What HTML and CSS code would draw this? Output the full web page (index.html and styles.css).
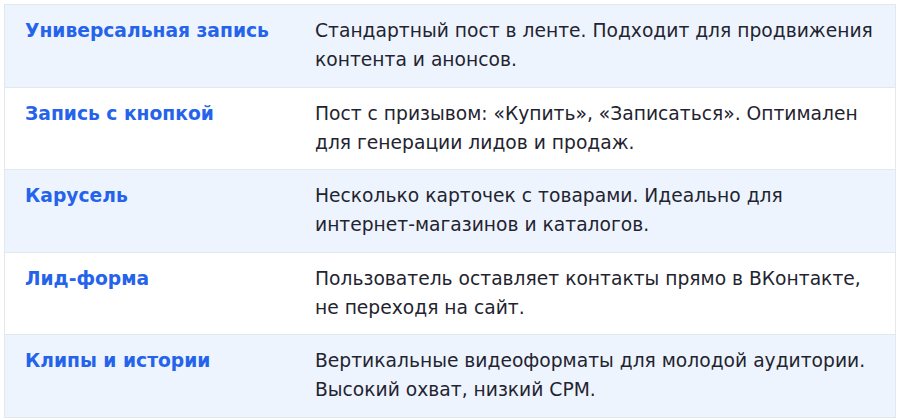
FILE: index.html
```html
<!DOCTYPE html>
<html lang="ru">
<head>
<meta charset="utf-8">
<link rel="stylesheet" href="styles.css">
</head>
<body>
<table class="formats">
  <tbody>
    <tr class="alt">
      <th class="name">Универсальная запись</th>
      <td class="desc">Стандартный пост в ленте. Подходит для продвижения контента и анонсов.</td>
    </tr>
    <tr>
      <th class="name">Запись с кнопкой</th>
      <td class="desc">Пост с призывом: «Купить», «Записаться». Оптимален для генерации лидов и продаж.</td>
    </tr>
    <tr class="alt">
      <th class="name">Карусель</th>
      <td class="desc">Несколько карточек с товарами. Идеально для интернет-магазинов и каталогов.</td>
    </tr>
    <tr>
      <th class="name">Лид-форма</th>
      <td class="desc">Пользователь оставляет контакты прямо в ВКонтакте, не переходя на сайт.</td>
    </tr>
    <tr class="alt">
      <th class="name">Клипы и истории</th>
      <td class="desc">Вертикальные видеоформаты для молодой аудитории. Высокий охват, низкий CPM.</td>
    </tr>
  </tbody>
</table>
</body>
</html>
```
FILE: styles.css
```css
html, body {
  margin: 0;
  padding: 0;
  background: #ffffff;
}
body {
  padding: 4px;
  font-family: "DejaVu Sans", sans-serif;
  font-size: 18.7px;
  line-height: 29px;
  color: #1f2430;
}
.formats {
  width: 892px;
  border-collapse: collapse;
  border: 1px solid #e3e8ef;
}
.formats tr {
  border-bottom: 1px solid #e3e8ef;
}
.formats tr.alt {
  background: #eef4fe;
}
.name {
  width: 250px;
  text-align: left;
  vertical-align: top;
  padding: 11px 20px 12.5px;
  color: #2563eb;
  font-weight: bold;
}
.desc {
  vertical-align: top;
  padding: 11px 20px 12.5px;
}
```
